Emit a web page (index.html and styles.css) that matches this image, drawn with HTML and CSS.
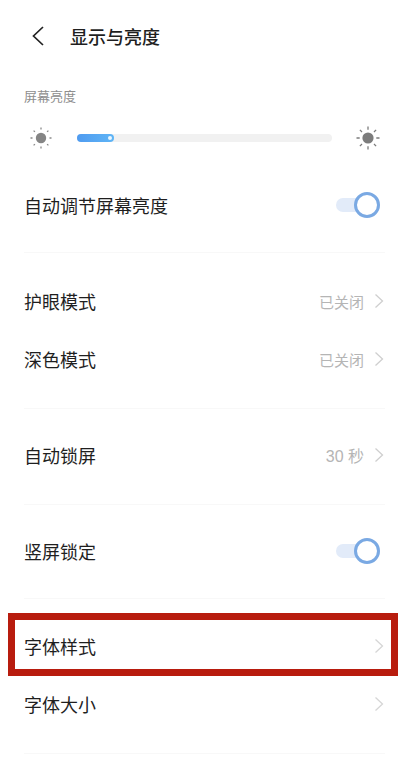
FILE: index.html
```html
<!DOCTYPE html>
<html>
<head>
    <title>显示与亮度</title>
    <link rel="stylesheet" href="styles.css">
</head>
<body>
    <div class="page">
        <div class="header">
            <svg class="back" width="14" height="22" viewBox="0 0 14 22"><path d="M12 2 L2.5 11 L12 20" fill="none" stroke="#222" stroke-width="1.7"/></svg>
            <h1>显示与亮度</h1>
        </div>

        <div class="section-label">屏幕亮度</div>
        <div class="slider-row">
            <svg class="sun" width="24" height="24" viewBox="0 0 24 24">
                <circle cx="12" cy="12" r="5.2" fill="#858585"/>
                <path d="M12 1.5v2M12 20.5v2M1.5 12h2M20.5 12h2M4.6 4.6l1.3 1.3M18.1 18.1l1.3 1.3M4.6 19.4l1.3-1.3M18.1 5.9l1.3-1.3" stroke="#8a8a8a" stroke-width="1.3" fill="none"/>
            </svg>
            <div class="track">
                <div class="fill" style="width: 37px"><span class="thumb"></span></div>
            </div>
            <svg class="sun" width="24" height="24" viewBox="0 0 24 24">
                <circle cx="12" cy="12" r="5.6" fill="#7c7c7c"/>
                <path d="M12 0.5v3.2M12 20.3v3.2M0.5 12h3.2M20.3 12h3.2M3.9 3.9l2.1 2.1M18 18l2.1 2.1M3.9 20.1L6 18M18 6l2.1-2.1" stroke="#7c7c7c" stroke-width="1.3" fill="none"/>
            </svg>
        </div>

        <div class="row row-first">
            <span class="name">自动调节屏幕亮度</span>
            <span class="toggle"><span class="knob"></span></span>
        </div>
        <div class="divider divider-first"></div>

        <div class="row">
            <span class="name">护眼模式</span>
            <span class="value">已关闭</span>
            <svg class="chevron" width="10" height="16" viewBox="0 0 10 16"><path d="M1.5 1.5 L8.5 8 L1.5 14.5" fill="none" stroke="#cfcfcf" stroke-width="1.3"/></svg>
        </div>
        <div class="row">
            <span class="name">深色模式</span>
            <span class="value">已关闭</span>
            <svg class="chevron" width="10" height="16" viewBox="0 0 10 16"><path d="M1.5 1.5 L8.5 8 L1.5 14.5" fill="none" stroke="#cfcfcf" stroke-width="1.3"/></svg>
        </div>
        <div class="divider"></div>

        <div class="row">
            <span class="name">自动锁屏</span>
            <span class="value value-num">30 秒</span>
            <svg class="chevron" width="10" height="16" viewBox="0 0 10 16"><path d="M1.5 1.5 L8.5 8 L1.5 14.5" fill="none" stroke="#cfcfcf" stroke-width="1.3"/></svg>
        </div>
        <div class="divider"></div>

        <div class="row">
            <span class="name">竖屏锁定</span>
            <span class="toggle"><span class="knob"></span></span>
        </div>
        <div class="divider divider-tight"></div>

        <div class="row row-marked">
            <span class="name">字体样式</span>
            <svg class="chevron" width="10" height="16" viewBox="0 0 10 16"><path d="M1.5 1.5 L8.5 8 L1.5 14.5" fill="none" stroke="#d6d6d6" stroke-width="1.3"/></svg>
            <div class="red-box"></div>
        </div>
        <div class="row">
            <span class="name">字体大小</span>
            <svg class="chevron" width="10" height="16" viewBox="0 0 10 16"><path d="M1.5 1.5 L8.5 8 L1.5 14.5" fill="none" stroke="#d6d6d6" stroke-width="1.3"/></svg>
        </div>
        <div class="divider"></div>
    </div>
</body>
</html>
```

FILE: styles.css
```css
body {
    margin: 0;
    background-color: #fff;
    font-family: "Liberation Sans", "Noto Sans CJK SC", sans-serif;
}
.page {
    width: 409px;
    height: 774px;
    overflow: hidden;
    padding: 0 24px;
    box-sizing: border-box;
}
.header {
    display: flex;
    align-items: center;
    height: 72px;
    margin-left: 7px;
}
.back {
    margin-right: 25px;
}
h1 {
    margin: 0;
    font-size: 18px;
    font-weight: 500;
    color: #1f1f1f;
}
.section-label {
    height: 18px;
    line-height: 18px;
    margin-top: 16px;
    font-size: 13px;
    color: #8e8e8e;
}
.slider-row {
    display: flex;
    align-items: center;
    height: 24px;
    margin-top: 20px;
    padding-left: 5px;
}
.sun {
    flex: none;
}
.track {
    width: 255px;
    height: 8px;
    margin: 0 24px;
    border-radius: 4px;
    background-color: #f1f1f1;
}
.fill {
    position: relative;
    height: 8px;
    border-radius: 4px;
    background: linear-gradient(to right, #4f9bf0, #5fb5f6);
}
.thumb {
    position: absolute;
    right: 2px;
    top: 2px;
    width: 4px;
    height: 4px;
    border-radius: 50%;
    background-color: #e8f6ff;
}
.row {
    display: flex;
    align-items: center;
    height: 58px;
    padding-bottom: 2px;
    box-sizing: border-box;
}
.row-first {
    margin-top: 27px;
}
.row-marked {
    position: relative;
}
.name {
    flex: 1;
    font-size: 18px;
    color: #1f1f1f;
}
.value {
    font-size: 15px;
    color: #b5b5b5;
}
.value-num {
    font-size: 16px;
}
.chevron {
    flex: none;
    margin-left: 10px;
    margin-right: 1px;
}
.toggle {
    display: flex;
    align-items: center;
    justify-content: flex-end;
    width: 44px;
    height: 14px;
    margin-right: 5px;
    border-radius: 7px;
    background-color: #e2ebf9;
}
.knob {
    flex: none;
    width: 20px;
    height: 20px;
    border: 3px solid #7aa9e3;
    border-radius: 50%;
    background-color: #fff;
}
.divider {
    height: 1px;
    margin: 19px 0 18px;
    background-color: #f8f8f8;
}
.divider-first {
    margin: 17px 0 20px;
}
.divider-tight {
    margin: 17px 0 19px;
}
.red-box {
    position: absolute;
    left: -16px;
    right: -13px;
    top: -5px;
    bottom: 0;
    border: 7px solid #b81c0e;
}
```
